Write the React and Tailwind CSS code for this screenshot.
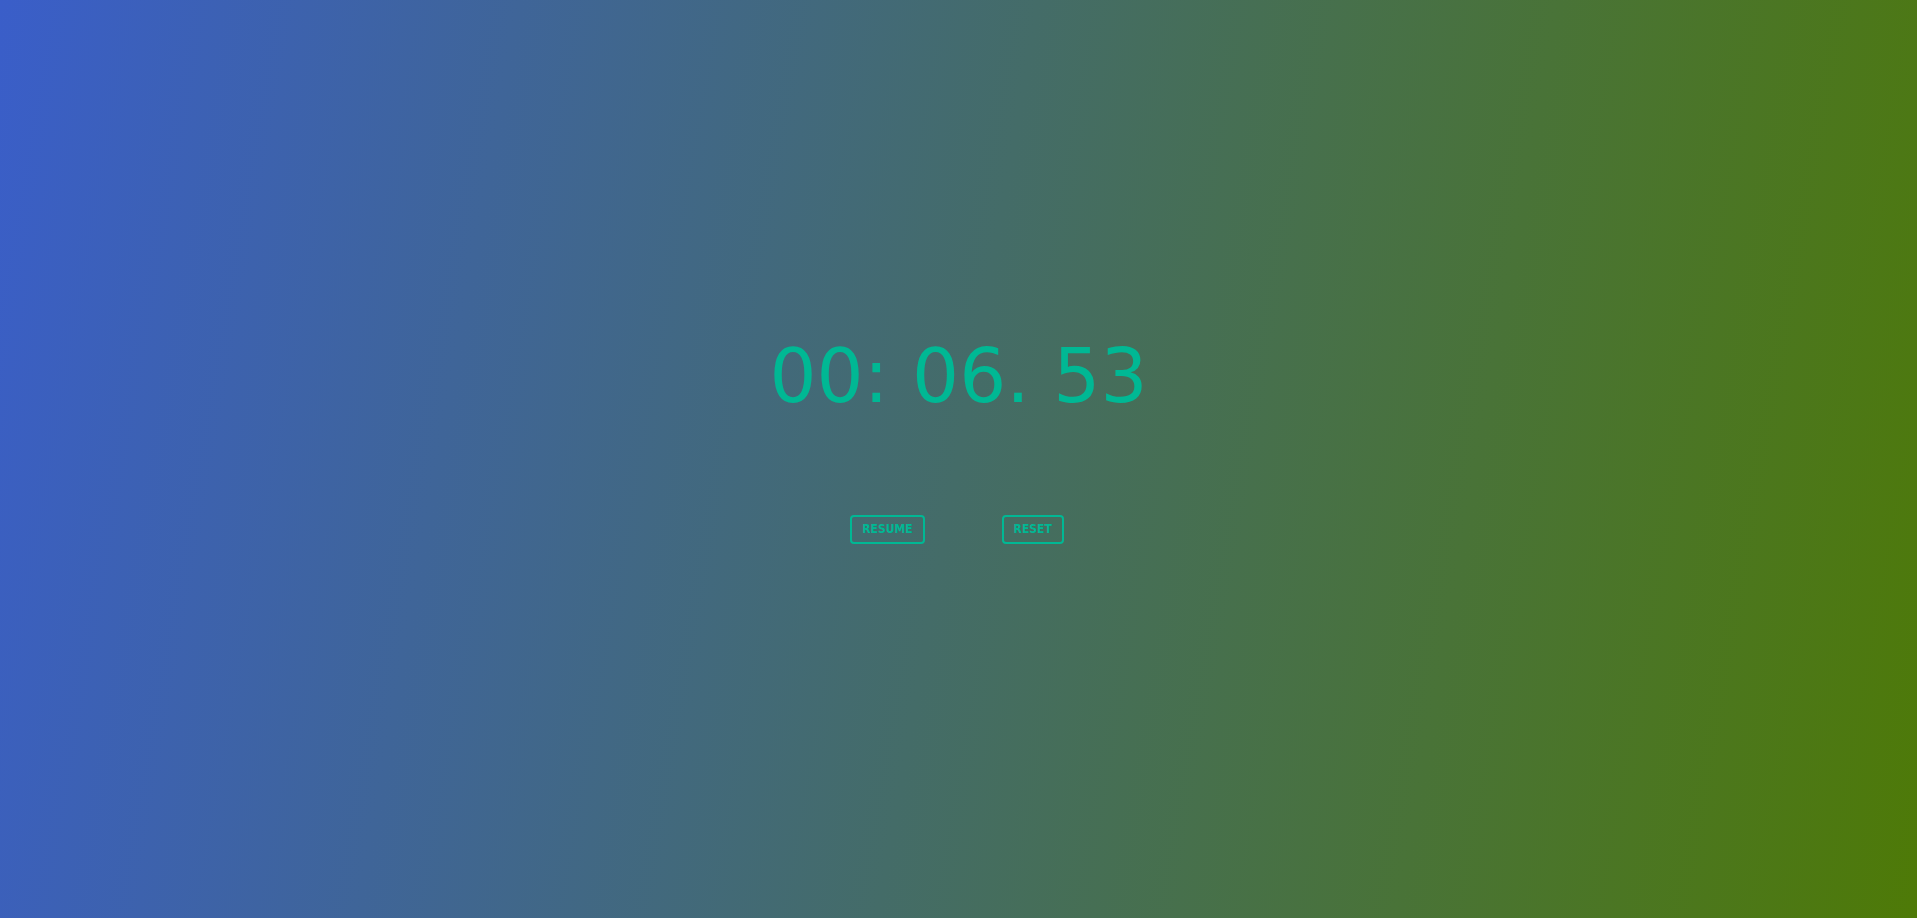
import React, { useState } from 'react';

function Stopwatch() {
    const [time] = useState({ min: '00', sec: '06', ms: '53' });

    return (
        <div className="h-screen w-full bg-[linear-gradient(100deg,#3a5ec9,#4e7a07)] flex flex-col items-center justify-center pb-[42px]">
            <div className="text-[74px] leading-[87px] text-[#00b894] whitespace-pre font-['DejaVu_Sans',sans-serif]">
                {`${time.min}: ${time.sec}. ${time.ms}`}
            </div>
            <div className="flex gap-[77px] mt-[95px] ml-[-3px]">
                <button className="h-[29px] px-[10px] border-2 border-[#00b894] rounded-[4px] text-[#00b894] text-[12px] font-bold font-['DejaVu_Sans_Condensed','DejaVu_Sans',sans-serif] flex items-center">RESUME</button>
                <button className="h-[29px] px-[10px] border-2 border-[#00b894] rounded-[4px] text-[#00b894] text-[12px] font-bold font-['DejaVu_Sans_Condensed','DejaVu_Sans',sans-serif] flex items-center">RESET</button>
            </div>
        </div>
    );
}

export default function App() {
    return <Stopwatch />;
}
